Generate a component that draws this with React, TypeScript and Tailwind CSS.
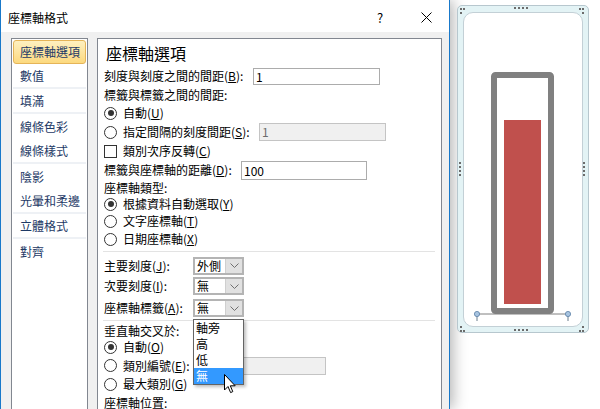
import React from 'react';

const Radio = ({ checked }: { checked?: boolean }) => (
  <span className="w-[13px] h-[13px] rounded-full border border-[#333333] bg-white flex items-center justify-center shrink-0">
    {checked && <span className="w-[6px] h-[6px] rounded-full bg-[#333333]" />}
  </span>
);

const Key = ({ k }: { k: string }) => (
  <>
    (<span className="underline">{k}</span>)
  </>
);

const Chevron = () => (
  <svg width="9" height="5" viewBox="0 0 9 5" className="text-[#707070]">
    <path d="M0.5 0.5 L4.5 4.5 L8.5 0.5" fill="none" stroke="currentColor" strokeWidth="1" />
  </svg>
);

const Select = ({ value }: { value: string }) => (
  <div className="flex h-[18px] w-[51px] border-2 border-[#b4b4b4] bg-white">
    <span className="flex-1 pl-[2px] text-[12px] leading-[14px] text-black">{value}</span>
    <span className="w-[17px] bg-[#e1e1e1] border-l border-[#cfcfcf] flex items-center justify-center">
      <Chevron />
    </span>
  </div>
);

const navItems = [
  { label: '數值', sep: true },
  { label: '填滿', sep: true },
  { label: '線條色彩', sep: false },
  { label: '線條樣式', sep: true },
  { label: '陰影', sep: false },
  { label: '光暈和柔邊', sep: true },
  { label: '立體格式', sep: true },
  { label: '對齊', sep: false },
];

const ChartSelection = () => {
  const dots: [number, number][] = [
    [4, 4], [7, 4], [4, 8],
    [123, 4], [126, 4], [126, 8],
    [4, 322], [4, 326], [7, 326],
    [126, 322], [123, 326], [126, 326],
    [58, 3], [62, 3], [66, 3], [70, 3],
    [58, 325], [62, 325], [66, 325], [70, 325],
    [3, 158], [3, 162], [3, 166], [3, 170],
    [127, 158], [127, 162], [127, 166], [127, 170],
  ];
  return (
    <div className="relative w-[132px] h-[328px] rounded-[5px] border border-[#b7c7ce] bg-[#e3f3f5] p-[5px] pt-[6px]">
      <div className="w-full h-full rounded-[10px] border border-[#c3d0d6] bg-white" />
      <svg className="absolute left-[-1px] top-[-1px]" width="132" height="328" viewBox="0 0 132 328">
        <rect x="37" y="70" width="57" height="236" rx="1.5" fill="none" stroke="#808080" strokeWidth="6" />
        <rect x="47" y="115" width="37" height="184" fill="#c0504d" />
        <line x1="20" y1="309" x2="111" y2="309" stroke="#808080" strokeWidth="1" />
        <line x1="20" y1="311" x2="20" y2="316" stroke="#6a7d8c" strokeWidth="1" />
        <line x1="111" y1="311" x2="111" y2="316" stroke="#6a7d8c" strokeWidth="1" />
        <circle cx="20" cy="309" r="2.6" fill="#a8c4e0" stroke="#5b7fa6" strokeWidth="0.8" />
        <circle cx="111" cy="309" r="2.6" fill="#a8c4e0" stroke="#5b7fa6" strokeWidth="0.8" />
        {dots.map(([x, y], i) => (
          <rect key={i} x={x - 1} y={y - 1} width="2" height="2" fill="#6b6b6b" />
        ))}
      </svg>
    </div>
  );
};

export default function App() {
  return (
    <div className="w-[600px] h-[409px] bg-white flex overflow-hidden font-['Noto_Sans_CJK_TC','Noto_Sans',sans-serif] text-black">
      {/* dialog */}
      <div className="relative z-0 w-[450px] h-[409px] shrink-0 flex flex-col border-x border-[#1979ca] bg-[#f0f0f0] shadow-[3px_0_14px_rgba(0,0,0,0.3)]">
        <div className="h-[32px] bg-white flex items-center pt-[3px] shrink-0">
          <span className="pl-[7px] text-[12px]">座標軸格式</span>
          <span className="flex-1" />
          <span className="w-[46px] text-center text-[13px]">?</span>
          <span className="w-[46px] flex justify-center">
            <svg width="11" height="11" viewBox="0 0 11 11">
              <path d="M0.5 0.5 L10.5 10.5 M10.5 0.5 L0.5 10.5" stroke="#000" strokeWidth="1" />
            </svg>
          </span>
        </div>

        <div className="flex-1 flex pl-[10px] pt-[6px] gap-[9px]">
          {/* nav */}
          <div className="w-[77px] h-[380px] border border-[#828790] bg-white px-[1px] pt-[1px] text-[12px] text-[#1e3a66]">
            <div className="h-[24px] flex items-center pl-[6px] rounded-[3px] border border-[#e5b458] bg-gradient-to-b from-[#fef0c0] to-[#fcd97e]">
              座標軸選項
            </div>
            {navItems.map((n) => (
              <div
                key={n.label}
                className={`h-[25px] flex items-center pl-[7px] ${n.sep ? 'border-b-2 border-[#eef1f5]' : ''}`}
              >
                {n.label}
              </div>
            ))}
          </div>

          {/* options panel */}
          <div className="relative w-[345px] h-[400px] border border-[#828790] bg-white pl-[6px] pt-[1px] text-[12px]">
            <div className="h-[26px] flex items-center pl-[2px] text-[16px]">座標軸選項</div>

            <div className="h-[20px] flex items-center">
              <span className="w-[149px]">刻度與刻度之間的間距<Key k="B" />:</span>
              <span className="w-[127px] h-[17px] border border-[#acacac] pl-[2px] leading-[15px]">1</span>
            </div>
            <div className="h-[18px] flex items-center">標籤與標籤之間的間距:</div>
            <div className="h-[18px] flex items-center gap-[6px]">
              <Radio checked />
              <span>自動<Key k="U" /></span>
            </div>
            <div className="h-[20px] flex items-center">
              <Radio />
              <span className="w-[142px] pl-[6px]">指定間隔的刻度間距<Key k="S" />:</span>
              <span className="w-[127px] h-[18px] border border-[#c4c4c4] bg-[#f0f0f0] pl-[2px] leading-[16px] text-[#6d6d6d]">1</span>
            </div>
            <div className="h-[18px] flex items-center gap-[6px]">
              <span className="w-[13px] h-[13px] border border-[#333333] bg-white shrink-0" />
              <span>類別次序反轉<Key k="C" /></span>
            </div>
            <div className="h-[20px] flex items-center">
              <span className="w-[137px]">標籤與座標軸的距離<Key k="D" />:</span>
              <span className="w-[126px] h-[19px] border border-[#acacac] pl-[2px] leading-[17px]">100</span>
            </div>
            <div className="h-[16px] flex items-center">座標軸類型:</div>
            <div className="h-[16px] flex items-center gap-[6px]">
              <Radio checked />
              <span>根據資料自動選取<Key k="Y" /></span>
            </div>
            <div className="h-[18px] flex items-center gap-[6px]">
              <Radio />
              <span>文字座標軸<Key k="T" /></span>
            </div>
            <div className="h-[18px] flex items-center gap-[6px]">
              <Radio />
              <span>日期座標軸<Key k="X" /></span>
            </div>
            <div className="h-[8px] pt-[3px]">
              <div className="ml-[-1px] w-[332px] border-t border-[#e3e3e3]" />
            </div>

            <div className="h-[19px] flex items-center">
              <span className="w-[89px]">主要刻度<Key k="J" />:</span>
              <Select value="外側" />
            </div>
            <div className="h-[22px] flex items-center">
              <span className="w-[89px]">次要刻度<Key k="I" />:</span>
              <Select value="無" />
            </div>
            <div className="h-[22px] flex items-center">
              <span className="w-[89px]">座標軸標籤<Key k="A" />:</span>
              <Select value="無" />
            </div>
            <div className="h-[4px] pt-[1px]">
              <div className="ml-[-1px] w-[332px] border-t border-[#e3e3e3]" />
            </div>

            <div className="h-[15px] flex items-center">垂直軸交叉於:</div>
            <div className="h-[18px] flex items-center gap-[6px]">
              <Radio checked />
              <span>自動<Key k="O" /></span>
            </div>
            <div className="h-[19px] flex items-center">
              <Radio />
              <span className="w-[126px] pl-[6px]">類別編號<Key k="E" />:</span>
              <span className="w-[83px] h-[18px] border border-[#c4c4c4] bg-[#f0f0f0]" />
            </div>
            <div className="h-[18px] flex items-center gap-[6px]">
              <Radio />
              <span>最大類別<Key k="G" /></span>
            </div>
            <div className="h-[20px] flex items-center">座標軸位置:</div>

            {/* open dropdown list */}
            <div className="absolute left-[95px] top-[280px] w-[51px] border border-[#646464] bg-white shadow-[2px_2px_3px_rgba(0,0,0,0.25)]">
              {['軸旁', '高', '低', '無'].map((o, i) => (
                <div
                  key={o}
                  className={`h-[16px] pl-[2px] leading-[16px] ${i === 3 ? 'bg-[#3399ff] text-white' : ''}`}
                >
                  {o}
                </div>
              ))}
            </div>

            {/* mouse pointer */}
            <svg className="absolute left-[126px] top-[335px]" width="13" height="20" viewBox="0 0 13 20">
              <path
                d="M0.5 0.5 L0.5 16 L4 12.5 L6.6 18.6 L8.8 17.6 L6.3 11.8 L11.2 11.8 Z"
                fill="#fff"
                stroke="#000"
                strokeWidth="1"
                strokeLinejoin="round"
              />
            </svg>
          </div>
        </div>
      </div>

      {/* selected chart on sheet */}
      <div className="relative z-10 ml-[7px] mt-[5px]">
        <ChartSelection />
      </div>
    </div>
  );
}
